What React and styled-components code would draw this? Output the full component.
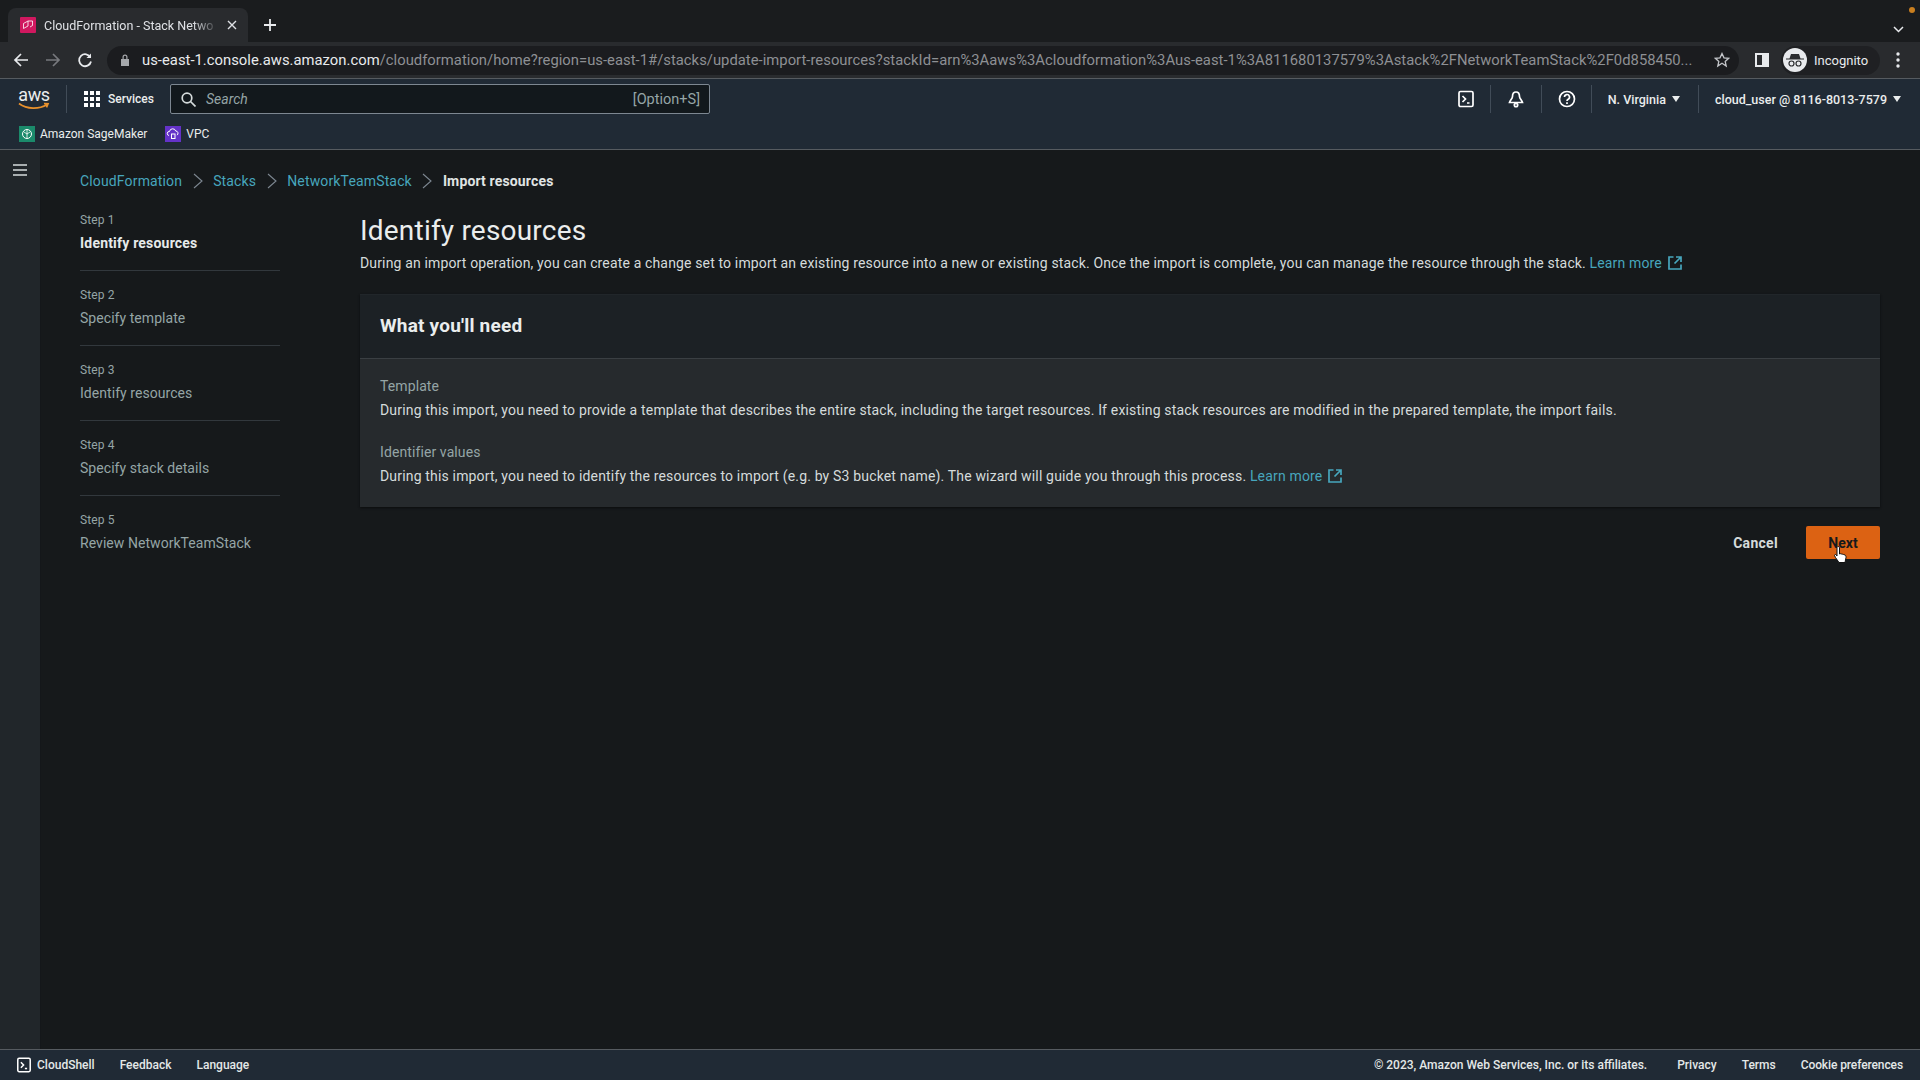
import React from 'react';
import styled, { createGlobalStyle } from 'styled-components';

const font = `Roboto, "Liberation Sans", sans-serif`;
const link = '#47a6bd';

const GlobalStyle = createGlobalStyle`
  html, body { margin: 0; padding: 0; height: 100%; background: #16191b; }
  body { font-family: ${font}; overflow: hidden; }
  * { box-sizing: border-box; }
`;

const Page = styled.div`
  position: relative;
  width: 1920px;
  height: 1080px;
  display: flex;
  flex-direction: column;
  color: #d5dbdb;
`;

/* browser chrome */
const TabStrip = styled.div`
  height: 42px;
  flex: none;
  display: flex;
  align-items: flex-end;
  padding-left: 8px;
  background: #1a1c1e;
`;

const Tab = styled.div`
  width: 240px;
  height: 34px;
  display: flex;
  align-items: center;
  padding: 0 12px;
  background: #292b2e;
  border-radius: 8px 8px 0 0;
`;

const TabIcon = styled.svg`
  width: 16px;
  height: 16px;
  flex: none;
  margin-right: 8px;
`;

const TabTitle = styled.span`
  flex: 1;
  font-size: 12.5px;
  color: #dfe1e5;
  white-space: nowrap;
  -webkit-mask-image: linear-gradient(90deg, #000 85%, transparent);
  mask-image: linear-gradient(90deg, #000 85%, transparent);
`;

const TabClose = styled.svg`
  width: 10px;
  height: 10px;
  margin-left: 8px;
  margin-right: -1px;
  flex: none;
`;

const NewTab = styled.svg`
  width: 14px;
  height: 14px;
  margin: 0 0 10px 15px;
`;

const TabSpacer = styled.div`flex: 1;`;

const TabMenu = styled.svg`
  width: 11px;
  height: 7px;
  margin: 0 16px 9px 0;
`;

const RecordDot = styled.span`
  position: absolute;
  top: 7px;
  left: 1909px;
  width: 6px;
  height: 6px;
  border-radius: 50%;
  background: #c97f1f;
`;

const Toolbar = styled.div`
  height: 36px;
  flex: none;
  display: flex;
  align-items: center;
  padding-left: 13px;
  background: #292b2e;
`;

const NavIcon = styled.svg`
  width: 16px;
  height: 16px;
  flex: none;
  margin-right: 16px;
`;

const Omnibox = styled.div`
  width: 1632px;
  height: 29px;
  flex: none;
  margin-left: -2px;
  display: flex;
  align-items: center;
  padding: 0 9px 0 13px;
  border-radius: 15px;
  background: #1b1c1f;
`;

const Lock = styled.svg`
  width: 10px;
  height: 12px;
  flex: none;
  margin-right: 12px;
`;

const Url = styled.div`
  flex: 1;
  font-size: 14.8px;
  letter-spacing: .02px;
  color: #8e9094;
  white-space: nowrap;

  b {
    font-weight: 400;
    color: #e8eaed;
  }
`;

const StarIcon = styled.svg`
  width: 16px;
  height: 16px;
  flex: none;
`;

const PanelIcon = styled.svg`
  width: 14px;
  height: 14px;
  flex: none;
  margin-left: 16px;
`;

const IncognitoPill = styled.div`
  width: 99px;
  height: 29px;
  flex: none;
  margin-left: 12px;
  display: flex;
  align-items: center;
  gap: 7px;
  padding-left: 2px;
  border-radius: 15px;
  background: #1f2023;
  font-size: 13px;
  color: #e8eaed;
`;

const IncognitoBadge = styled.svg`
  width: 24px;
  height: 24px;
  flex: none;
`;

const Dots = styled.svg`
  width: 4px;
  height: 16px;
  margin-left: 16px;
  flex: none;
`;

/* AWS console header */
const Header = styled.header`
  height: 72px;
  flex: none;
  border-top: 1px solid #565b60;
  border-bottom: 1px solid #565b60;
  background: #202a35;
`;

const TopNav = styled.div`
  height: 40px;
  display: flex;
  align-items: center;
  padding: 0 19px 0 18px;
  font-size: 12px;
  color: #eaeded;
`;

const Logo = styled.div`
  position: relative;
  width: 32px;
  height: 25px;
  flex: none;
  font-size: 18px;
  letter-spacing: -.3px;
  line-height: 16px;
  text-align: center;
  color: #eaeded;
`;

const Smile = styled.svg`
  position: absolute;
  left: 0;
  bottom: 1px;
  width: 32px;
  height: 9px;
`;

const NavDivider = styled.span`
  width: 1px;
  height: 28px;
  flex: none;
  margin: ${p => p.$margin || '0 17px 0 16px'};
  background: #414c58;
`;

const GridIcon = styled.svg`
  width: 16px;
  height: 16px;
  margin-right: 8px;
  flex: none;
`;

const ServicesLabel = styled.span`
  width: 45px;
  font-weight: 500;
  white-space: nowrap;
`;

const SearchBox = styled.div`
  width: 540px;
  height: 30px;
  flex: none;
  margin-left: 17px;
  display: flex;
  align-items: center;
  padding: 0 9px 0 10px;
  background: #12181c;
  border: 1px solid #7d8791;
  border-radius: 2px;
`;

const SearchIcon = styled.svg`
  width: 15px;
  height: 15px;
  margin-right: 10px;
  flex: none;
`;

const SearchHint = styled.span`
  flex: 1;
  font-size: 14px;
  font-style: italic;
  color: #95a5a6;
`;

const SearchKey = styled.span`
  font-size: 14.5px;
  color: #95a5a6;
`;

const NavSpacer = styled.div`flex: 1;`;

const NavIconBox = styled.svg`
  width: 18px;
  height: 18px;
  flex: none;
`;

const MenuLabel = styled.span`
  font-size: 12.5px;
  font-weight: 500;
  white-space: nowrap;
`;

const Caret = styled.span`
  width: 0;
  height: 0;
  flex: none;
  margin-left: 6px;
  border-left: 4px solid transparent;
  border-right: 4px solid transparent;
  border-top: 6px solid #eaeded;
`;

const Favorites = styled.div`
  height: 29px;
  display: flex;
  align-items: center;
  padding-left: 19px;
  font-size: 12px;
  color: #eaeded;
`;

const Favorite = styled.div`
  display: flex;
  align-items: center;
  gap: 5px;
  margin-right: 18px;
`;

const ServiceIcon = styled.svg`
  width: 16px;
  height: 16px;
  flex: none;
`;

/* page body */
const Body = styled.div`
  flex: 1;
  min-height: 0;
  display: flex;
`;

const Rail = styled.aside`
  width: 41px;
  flex: none;
  padding: 13px 0 0 13px;
  background: #21262a;
  border-right: 1px solid #14171a;
`;

const Burger = styled.svg`
  width: 14px;
  height: 14px;
  display: block;
`;

const Content = styled.main`
  flex: 1;
  min-width: 0;
  padding: 0 40px 0 39px;
`;

const Breadcrumbs = styled.nav`
  height: 60px;
  padding-top: 2px;
  display: flex;
  align-items: center;
  font-size: 14px;
  color: ${link};
`;

const Crumb = styled.span`
  color: ${p => (p.$current ? '#e0e4e4' : link)};
  font-weight: ${p => (p.$current ? 700 : 400)};
  letter-spacing: .15px;
`;

const Chevron = styled.svg`
  width: 10px;
  height: 16px;
  margin: 0 10.5px;
  flex: none;
`;

const Columns = styled.div`
  display: flex;
`;

const Steps = styled.ol`
  width: 200px;
  flex: none;
  margin: 0 80px 0 0;
  padding: 0;
  list-style: none;
`;

const Step = styled.li`
  height: ${p => (p.$first ? '61px' : '75px')};
  padding-top: ${p => (p.$first ? '1px' : '15px')};
  border-bottom: ${p => (p.$last ? 'none' : '1px solid #32383d')};
`;

const StepNumber = styled.div`
  font-size: 12px;
  line-height: 18px;
  letter-spacing: .1px;
  color: #95a5a6;
`;

const StepName = styled.div`
  margin-top: 4px;
  font-size: 14px;
  line-height: 20px;
  letter-spacing: ${p => (p.$active ? '.2px' : '.05px')};
  color: ${p => (p.$active ? '#e6eaea' : '#95a5a6')};
  font-weight: ${p => (p.$active ? 700 : 400)};
`;

const Main = styled.section`
  flex: 1;
  min-width: 0;
`;

const Title = styled.h1`
  margin: 3px 0 0;
  font-size: 28px;
  line-height: 36px;
  letter-spacing: .2px;
  font-weight: 400;
  color: #eaeded;
`;

const Description = styled.p`
  margin: 4px 0 0;
  font-size: 14px;
  line-height: 20px;
  letter-spacing: .15px;
  color: #d5dbdb;
`;

const InlineLink = styled.a`
  color: ${link};
  text-decoration: none;
`;

const External = styled.svg`
  width: 14px;
  height: 14px;
  margin-left: 6px;
  vertical-align: -2px;
`;

const Card = styled.div`
  margin-top: 21px;
  background: #262a2d;
  border-top: 1px solid #21262a;
  box-shadow: 0 1px 2px #0b0d0e;
`;

const CardHeader = styled.div`
  height: 64px;
  display: flex;
  align-items: center;
  padding: 0 20px 2px;
  background: #1c2125;
  border-bottom: 1px solid #3a3f43;
  font-size: 19px;
  letter-spacing: .2px;
  font-weight: 700;
  color: #eaeded;
`;

const CardBody = styled.div`
  height: 148px;
  padding: 17px 20px 0;
`;

const Field = styled.div`
  margin-bottom: 22px;
`;

const FieldLabel = styled.div`
  font-size: 14px;
  line-height: 20px;
  letter-spacing: .1px;
  color: #95a5a6;
`;

const FieldValue = styled.div`
  margin-top: 4px;
  font-size: 14px;
  line-height: 20px;
  letter-spacing: .17px;
  color: #d5dbdb;
`;

const Actions = styled.div`
  display: flex;
  justify-content: flex-end;
  align-items: center;
  margin-top: 19px;
`;

const CancelButton = styled.button`
  margin-right: 28px;
  padding: 0;
  border: none;
  background: none;
  font: 700 14px ${font};
  letter-spacing: .3px;
  color: #d5dbdb;
`;

const NextButton = styled.button`
  width: 74px;
  height: 33px;
  border: none;
  border-radius: 2px;
  background: #dc6213;
  font: 700 14px ${font};
  color: #16191b;
`;

const Pointer = styled.svg`
  position: absolute;
  left: 1833px;
  top: 545px;
  width: 16px;
  height: 20px;
`;

const Footer = styled.footer`
  height: 31px;
  flex: none;
  display: flex;
  align-items: center;
  padding: 0 17px 0 16px;
  border-top: 1px solid #565b60;
  background: #202a35;
  font-size: 12px;
  font-weight: 500;
  color: #e4e8e8;
`;

const FooterItem = styled.span`
  display: flex;
  align-items: center;
  white-space: nowrap;
  margin-right: ${p => p.$gap || '25px'};
`;

const FooterLast = styled.span`
  white-space: nowrap;
  letter-spacing: -.1px;
`;

const ShellIcon = styled.svg`
  width: 16px;
  height: 16px;
  margin-right: 5px;
`;

const ExternalIcon = () => (
  <External viewBox="0 0 14 14" fill="none" stroke={link} strokeWidth="1.7">
    <path d="M5.5 1H1v12h12V8.5M8 1h5v5M13 1 6.5 7.5" />
  </External>
);

const ShellGlyph = ({ as: Wrap = NavIconBox }) => (
  <Wrap viewBox="0 0 18 18" fill="none" stroke="#fff" strokeWidth="1.7">
    <rect x="2" y="1.5" width="14" height="15" rx="1.5" />
    <path d="m5.5 6 3 3-3 3M10 13h2.5" />
  </Wrap>
);

const CrumbChevron = () => (
  <Chevron viewBox="0 0 10 16" fill="none" stroke="#7d8791" strokeWidth="1.1">
    <path d="m1 1 8 7-8 7" />
  </Chevron>
);

const STEPS = [
  'Identify resources',
  'Specify template',
  'Identify resources',
  'Specify stack details',
  'Review NetworkTeamStack',
];

export default function App() {
  return (
    <Page>
      <GlobalStyle />
      <TabStrip>
        <Tab>
          <TabIcon viewBox="0 0 16 16">
            <rect width="16" height="16" rx="1" fill="#d0185f" />
            <path d="M3.5 6.5 8 4v5l-4.500 2.500zM8 4h4.500v4.500L10 10" fill="none" stroke="#fff" strokeWidth="1" opacity=".8" />
          </TabIcon>
          <TabTitle>CloudFormation - Stack Netwo</TabTitle>
          <TabClose viewBox="0 0 10 10" stroke="#dfe1e5" strokeWidth="1.4">
            <path d="m1 1 8 8M9 1 1 9" />
          </TabClose>
        </Tab>
        <NewTab viewBox="0 0 14 14" stroke="#e8eaed" strokeWidth="1.8">
          <path d="M7 1v12M1 7h12" />
        </NewTab>
        <TabSpacer />
        <TabMenu viewBox="0 0 11 7" fill="none" stroke="#e8eaed" strokeWidth="1.5">
          <path d="m1 1 4.500 4.500L10 1" />
        </TabMenu>
      </TabStrip>
      <RecordDot />
      <Toolbar>
        <NavIcon viewBox="0 0 16 16" fill="none" stroke="#e8eaed" strokeWidth="1.7">
          <path d="M15 8H2M8 2 2 8l6 6" />
        </NavIcon>
        <NavIcon viewBox="0 0 16 16" fill="none" stroke="#77797d" strokeWidth="1.7">
          <path d="M1 8h13M8 2l6 6-6 6" />
        </NavIcon>
        <NavIcon viewBox="0 0 16 16" fill="none" stroke="#e8eaed" strokeWidth="1.8">
          <path d="M13.500 5.500A6 6 0 1 0 14 9.500" />
          <path d="M14 1.500V6H9.500" fill="#e8eaed" stroke="none" />
        </NavIcon>
        <Omnibox>
          <Lock viewBox="0 0 10 12" fill="#a6a8ac">
            <path d="M1 5h8v7H1zM2.500 5V3a2.500 2.500 0 0 1 5 0v2H6.300V3a1.300 1.300 0 0 0-2.600 0v2z" />
          </Lock>
          <Url>
            <b>us-east-1.console.aws.amazon.com</b>
            /cloudformation/home?region=us-east-1#/stacks/update-import-resources?stackId=arn%3Aaws%3Acloudformation%3Aus-east-1%3A811680137579%3Astack%2FNetworkTeamStack%2F0d858450...
          </Url>
          <StarIcon viewBox="0 0 16 16" fill="none" stroke="#c4c6ca" strokeWidth="1.3">
            <path d="m8 1.500 2 4.300 4.600.500-3.400 3.100 1 4.600L8 11.300l-4.200 2.700 1-4.600L1.400 6.300 6 5.800z" />
          </StarIcon>
        </Omnibox>
        <PanelIcon viewBox="0 0 14 14">
          <path d="M0 0h14v14H0zM2 2v10h5V2z" fill="#e8eaed" fillRule="evenodd" />
        </PanelIcon>
        <IncognitoPill>
          <IncognitoBadge viewBox="0 0 24 24">
            <circle cx="12" cy="12" r="12" fill="#e8eaed" />
            <path d="M8 6h8l1.500 4.500H21v1H3v-1h3.500z" fill="#2a2c2f" />
            <circle cx="8.500" cy="15.500" r="2.500" fill="none" stroke="#2a2c2f" strokeWidth="1.200" />
            <circle cx="15.500" cy="15.500" r="2.500" fill="none" stroke="#2a2c2f" strokeWidth="1.200" />
          </IncognitoBadge>
          Incognito
        </IncognitoPill>
        <Dots viewBox="0 0 4 16" fill="#e8eaed">
          <circle cx="2" cy="2" r="1.700" />
          <circle cx="2" cy="8" r="1.700" />
          <circle cx="2" cy="14" r="1.700" />
        </Dots>
      </Toolbar>

      <Header>
        <TopNav>
          <Logo>
            aws
            <Smile viewBox="0 0 32 9" fill="none" stroke="#e8912d" strokeWidth="1.700">
              <path d="M1 1.500c8 6 20 6 28 1M26 1.500l4 .3-1.500 3.500" />
            </Smile>
          </Logo>
          <NavDivider />
          <GridIcon viewBox="0 0 16 16" fill="#fff">
            {[0, 6, 12].flatMap(y =>
              [0, 6, 12].map(x => <rect key={`${x}-${y}`} x={x} y={y} width="4" height="4" />)
            )}
          </GridIcon>
          <ServicesLabel>Services</ServicesLabel>
          <SearchBox>
            <SearchIcon viewBox="0 0 15 15" fill="none" stroke="#d5dbdb" strokeWidth="1.700">
              <circle cx="6" cy="6" r="4.800" />
              <path d="m9.500 9.500 5 5" />
            </SearchIcon>
            <SearchHint>Search</SearchHint>
            <SearchKey>[Option+S]</SearchKey>
          </SearchBox>
          <NavSpacer />
          <ShellGlyph />
          <NavDivider $margin="0 16px 0 15px" />
          <NavIconBox viewBox="0 0 18 18" fill="none" stroke="#fff" strokeWidth="1.700">
            <path d="M9 2c-2.500 0-3.500 2-3.500 4.500 0 2-2.500 4-3 6h13c-.5-2-3-4-3-6C12.500 4 11.500 2 9 2z" />
            <circle cx="9" cy="15" r="1.700" />
          </NavIconBox>
          <NavDivider $margin="0 16px" />
          <NavIconBox viewBox="0 0 18 18" fill="none" stroke="#fff" strokeWidth="1.700">
            <circle cx="9" cy="9" r="7.500" />
            <path d="M6.500 7a2.500 2.500 0 1 1 3.700 2.200C9.300 9.700 9 10.200 9 11M9 12.300v1.600" />
          </NavIconBox>
          <NavDivider $margin="0 16px 0 15px" />
          <MenuLabel>N. Virginia</MenuLabel>
          <Caret />
          <NavDivider $margin="0 16px 0 18px" />
          <MenuLabel>cloud_user @ 8116-8013-7579</MenuLabel>
          <Caret />
        </TopNav>
        <Favorites>
          <Favorite>
            <ServiceIcon viewBox="0 0 16 16">
              <rect width="16" height="16" fill="#1b8a6b" />
              <circle cx="8" cy="8" r="4.500" fill="none" stroke="#fff" strokeWidth="1" />
              <path d="M8 3.500v9M5 6l3 2 3-2" fill="none" stroke="#fff" strokeWidth=".8" />
            </ServiceIcon>
            Amazon SageMaker
          </Favorite>
          <Favorite>
            <ServiceIcon viewBox="0 0 16 16">
              <rect width="16" height="16" fill="#6432c8" />
              <path d="M4 9.500a2 2 0 0 1 .5-4 3.200 3.200 0 0 1 6.200-.5 2.300 2.300 0 0 1 1.300 4.200" fill="none" stroke="#fff" strokeWidth="1" />
              <rect x="6.500" y="8" width="3.500" height="4.500" fill="none" stroke="#fff" strokeWidth="1" />
            </ServiceIcon>
            VPC
          </Favorite>
        </Favorites>
      </Header>

      <Body>
        <Rail>
          <Burger viewBox="0 0 14 14" stroke="#d5dbdb" strokeWidth="1.600">
            <path d="M0 2h14M0 7h14M0 12h14" />
          </Burger>
        </Rail>
        <Content>
          <Breadcrumbs>
            <Crumb>CloudFormation</Crumb>
            <CrumbChevron />
            <Crumb>Stacks</Crumb>
            <CrumbChevron />
            <Crumb>NetworkTeamStack</Crumb>
            <CrumbChevron />
            <Crumb $current>Import resources</Crumb>
          </Breadcrumbs>
          <Columns>
            <Steps>
              {STEPS.map((name, i) => (
                <Step key={i} $first={i === 0} $last={i === STEPS.length - 1}>
                  <StepNumber>Step {i + 1}</StepNumber>
                  <StepName $active={i === 0}>{name}</StepName>
                </Step>
              ))}
            </Steps>
            <Main>
              <Title>Identify resources</Title>
              <Description>
                During an import operation, you can create a change set to import an existing resource into a new or existing stack. Once the import is complete, you can manage the resource through the stack.{' '}
                <InlineLink>Learn more<ExternalIcon /></InlineLink>
              </Description>
              <Card>
                <CardHeader>What you'll need</CardHeader>
                <CardBody>
                  <Field>
                    <FieldLabel>Template</FieldLabel>
                    <FieldValue>During this import, you need to provide a template that describes the entire stack, including the target resources. If existing stack resources are modified in the prepared template, the import fails.</FieldValue>
                  </Field>
                  <Field>
                    <FieldLabel>Identifier values</FieldLabel>
                    <FieldValue>
                      During this import, you need to identify the resources to import (e.g. by S3 bucket name). The wizard will guide you through this process.{' '}
                      <InlineLink>Learn more<ExternalIcon /></InlineLink>
                    </FieldValue>
                  </Field>
                </CardBody>
              </Card>
              <Actions>
                <CancelButton>Cancel</CancelButton>
                <NextButton>Next</NextButton>
              </Actions>
            </Main>
          </Columns>
        </Content>
      </Body>

      <Footer>
        <FooterItem><ShellGlyph as={ShellIcon} />CloudShell</FooterItem>
        <FooterItem>Feedback</FooterItem>
        <FooterItem>Language</FooterItem>
        <NavSpacer />
        <FooterItem $gap="30px">© 2023, Amazon Web Services, Inc. or its affiliates.</FooterItem>
        <FooterItem>Privacy</FooterItem>
        <FooterItem>Terms</FooterItem>
        <FooterLast>Cookie preferences</FooterLast>
      </Footer>

      <Pointer viewBox="0 0 16 20">
        <path d="M5 1.500c1 0 1.500.7 1.500 1.500v6l1-.3 1 .3 1 .2 1 .3 1.500.5c1 .5 1 1.500 1 2.500l-1 5H6l-3.500-5-1-2c0-1 1-1.200 1.500-.8L4 11V3c0-.8.500-1.500 1-1.500z" fill="#fff" stroke="#111" strokeWidth="1" />
      </Pointer>
    </Page>
  );
}
